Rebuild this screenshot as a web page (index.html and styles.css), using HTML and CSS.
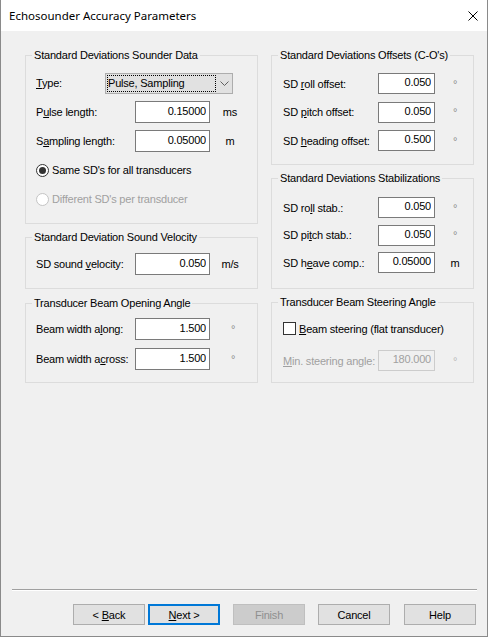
FILE: index.html
```html
<!DOCTYPE html>
<html lang="en">
<head>
  <meta charset="UTF-8" />
  <title>Echosounder Accuracy Parameters</title>
  <link rel="stylesheet" href="styles.css">
</head>
<body>
  <div class="window">
    <div class="titlebar">
      <span class="title">Echosounder Accuracy Parameters</span>
      <svg class="close" width="10" height="10" viewBox="0 0 10 10">
        <path d="M0.5 0.5 L9.5 9.5 M9.5 0.5 L0.5 9.5" stroke="#000" stroke-width="1" fill="none" />
      </svg>
    </div>

    <div class="client">
      <div class="columns">

        <div class="column col-left">
          <div class="group g-sounder">
            <div class="group-title">Standard Deviations Sounder Data</div>
            <div class="rows">
              <div class="row">
                <span class="label label-type"><u>T</u>ype:</span>
                <div class="combo">
                  <span class="combo-text">Pulse, Sampling</span>
                  <svg class="chevron" width="9" height="5" viewBox="0 0 9 5">
                    <path d="M0.5 0.5 L4.5 4.5 L8.5 0.5" stroke="#606060" stroke-width="1" fill="none" />
                  </svg>
                </div>
              </div>
              <div class="row">
                <span class="label">P<u>u</u>lse length:</span>
                <input class="field" type="text" value="0.15000" readonly>
                <span class="unit">ms</span>
              </div>
              <div class="row">
                <span class="label">S<u>a</u>mpling length:</span>
                <input class="field" type="text" value="0.05000" readonly>
                <span class="unit">m</span>
              </div>
              <div class="row">
                <span class="radio checked"></span>
                <span class="option">Same SD's for all transducers</span>
              </div>
              <div class="row disabled">
                <span class="radio"></span>
                <span class="option">Different SD's per transducer</span>
              </div>
            </div>
          </div>

          <div class="group g-velocity">
            <div class="group-title">Standard Deviation Sound Velocity</div>
            <div class="rows">
              <div class="row">
                <span class="label">SD sound <u>v</u>elocity:</span>
                <input class="field" type="text" value="0.050" readonly>
                <span class="unit">m/s</span>
              </div>
            </div>
          </div>

          <div class="group g-opening">
            <div class="group-title">Transducer Beam Opening Angle</div>
            <div class="rows">
              <div class="row">
                <span class="label">Beam width a<u>l</u>ong:</span>
                <input class="field" type="text" value="1.500" readonly>
                <span class="unit deg">°</span>
              </div>
              <div class="row">
                <span class="label">Beam width a<u>c</u>ross:</span>
                <input class="field" type="text" value="1.500" readonly>
                <span class="unit deg">°</span>
              </div>
            </div>
          </div>
        </div>

        <div class="column col-right">
          <div class="group g-offsets">
            <div class="group-title">Standard Deviations Offsets (C-O's)</div>
            <div class="rows">
              <div class="row">
                <span class="label">SD <u>r</u>oll offset:</span>
                <input class="field" type="text" value="0.050" readonly>
                <span class="unit deg">°</span>
              </div>
              <div class="row">
                <span class="label">SD <u>p</u>itch offset:</span>
                <input class="field" type="text" value="0.050" readonly>
                <span class="unit deg">°</span>
              </div>
              <div class="row">
                <span class="label">SD <u>h</u>eading offset:</span>
                <input class="field" type="text" value="0.500" readonly>
                <span class="unit deg">°</span>
              </div>
            </div>
          </div>

          <div class="group g-stab">
            <div class="group-title">Standard Deviations Stabilizations</div>
            <div class="rows">
              <div class="row">
                <span class="label">SD ro<u>l</u>l stab.:</span>
                <input class="field" type="text" value="0.050" readonly>
                <span class="unit deg">°</span>
              </div>
              <div class="row">
                <span class="label">SD pi<u>t</u>ch stab.:</span>
                <input class="field" type="text" value="0.050" readonly>
                <span class="unit deg">°</span>
              </div>
              <div class="row">
                <span class="label">SD h<u>e</u>ave comp.:</span>
                <input class="field" type="text" value="0.05000" readonly>
                <span class="unit">m</span>
              </div>
            </div>
          </div>

          <div class="group g-steer">
            <div class="group-title">Transducer Beam Steering Angle</div>
            <div class="rows">
              <div class="row">
                <span class="checkbox"></span>
                <span class="option"><u>B</u>eam steering (flat transducer)</span>
              </div>
              <div class="row disabled">
                <span class="label"><u>M</u>in. steering angle:</span>
                <input class="field" type="text" value="180.000" readonly disabled>
                <span class="unit deg">°</span>
              </div>
            </div>
          </div>
        </div>

      </div>

      <div class="footer">
        <div class="separator"></div>
        <div class="buttons">
          <button class="btn">&lt; <u>B</u>ack</button>
          <button class="btn btn-default"><u>N</u>ext &gt;</button>
          <button class="btn" disabled>Finish</button>
          <button class="btn">Cancel</button>
          <button class="btn">Help</button>
        </div>
      </div>
    </div>
  </div>
</body>
</html>
```

FILE: styles.css
```css
body {
  margin: 0;
  background: #f0f0f0;
}

.window {
  width: 488px;
  height: 637px;
  box-sizing: border-box;
  border: 1px solid #8a8a8a;
  border-top: none;
  display: flex;
  flex-direction: column;
  font-family: "Liberation Sans", Arial, sans-serif;
  font-size: 11px;
  letter-spacing: -0.2px;
  color: #000;
}

/* title bar */
.titlebar {
  height: 31px;
  flex-shrink: 0;
  background: #fff;
  display: flex;
  align-items: center;
  justify-content: space-between;
  padding: 0 9px 0 8px;
}
.title {
  font-family: "Noto Sans", "Open Sans", sans-serif;
  font-size: 11.5px;
  letter-spacing: 0;
}
.close {
  display: block;
}

/* dialog body */
.client {
  flex: 1;
  background: #f0f0f0;
  display: flex;
  flex-direction: column;
}
.columns {
  display: flex;
  padding: 24px 0 0 24px;
}
.column {
  display: flex;
  flex-direction: column;
}
.col-left {
  width: 233px;
}
.col-right {
  width: 203px;
  margin-left: 13px;
}

.group {
  border: 1px solid #dcdcdc;
  box-sizing: border-box;
}
.group-title {
  margin: -7px 0 0 6px;
  padding: 0 2px;
  height: 13px;
  line-height: 13px;
  width: max-content;
  background: #f0f0f0;
}
.rows {
  display: flex;
  flex-direction: column;
}
.row {
  display: flex;
  align-items: center;
  height: 22px;
  padding-left: 10px;
}

.g-sounder { height: 169px; }
.g-sounder .rows { padding-top: 10px; gap: 7px; }
.g-velocity { height: 52px; margin-top: 13px; }
.g-velocity .rows { padding-top: 9px; }
.g-opening { height: 80px; margin-top: 14px; }
.g-opening .rows { padding-top: 8px; gap: 8px; }

.g-offsets { height: 110px; }
.g-offsets .rows { padding-top: 11px; gap: 7.5px; }
.g-stab { height: 111px; margin-top: 13px; }
.g-stab .rows { padding-top: 12px; gap: 6.5px; }
.g-steer { height: 81px; margin-top: 13px; }
.g-steer .rows { padding-top: 9px; gap: 11px; }

.col-right .row {
  height: 21px;
  padding-left: 11px;
}

.label {
  width: 99px;
  flex-shrink: 0;
  white-space: nowrap;
}
.label-type {
  width: 69px;
}
.col-right .label {
  width: 95px;
}

.field {
  width: 75px;
  height: 22px;
  box-sizing: border-box;
  margin: 0;
  border: 1px solid #7a7a7a;
  background: #fff;
  padding: 0 3px 3px 0;
  text-align: right;
  font: inherit;
  letter-spacing: inherit;
  color: #000;
  outline: none;
}
.col-right .field {
  width: 57px;
  height: 21px;
}

.unit {
  width: 20px;
  margin-left: 10px;
  text-align: center;
}
.unit.deg {
  color: #8a8a8a;
  padding-left: 6px;
  box-sizing: border-box;
}
.col-right .unit.deg {
  padding-left: 0;
}

/* combo box */
.combo {
  width: 128px;
  height: 21px;
  box-sizing: border-box;
  border: 1px solid #adadad;
  background: #e1e1e1;
  display: flex;
  align-items: center;
}
.combo-text {
  flex: 1;
  height: 15px;
  line-height: 15px;
  margin: 0 15px 0 1px;
  border: 1px dotted #000;
  padding-left: 0;
}
.chevron {
  display: block;
  margin-right: 3px;
  margin-left: -11px;
}

/* radio and check boxes */
.radio {
  width: 13px;
  height: 13px;
  box-sizing: border-box;
  border: 1px solid #333;
  border-radius: 50%;
  background: #fff;
  display: flex;
  align-items: center;
  justify-content: center;
}
.radio.checked::after {
  content: "";
  width: 7px;
  height: 7px;
  border-radius: 50%;
  background: #333;
}
.checkbox {
  width: 13px;
  height: 13px;
  box-sizing: border-box;
  border: 1px solid #333;
  background: #fff;
}
.option {
  margin-left: 3px;
}

.disabled {
  color: #a0a0a0;
}
.disabled .radio {
  border-color: #c4c4c4;
}
.disabled .field {
  background: #f0f0f0;
  border-color: #cccccc;
  color: #a0a0a0;
}
.disabled .unit.deg {
  color: #b8b8b8;
}

/* wizard buttons */
.footer {
  margin-top: auto;
  padding: 0 10px 11px 11px;
}
.separator {
  border-top: 1px solid #a0a0a0;
  border-bottom: 1px solid #fff;
}
.buttons {
  display: flex;
  justify-content: flex-end;
  margin-top: 13px;
  padding-right: 1px;
}
.btn {
  width: 72px;
  height: 21px;
  box-sizing: border-box;
  margin: 0 0 0 13px;
  padding: 0;
  border: 1px solid #adadad;
  background: #e1e1e1;
  font: inherit;
  letter-spacing: inherit;
  color: #000;
}
.btn-default {
  margin-left: 3px;
  border-color: #0078d7;
  box-shadow: inset 0 0 0 1px #0078d7;
}
.btn:disabled {
  background: #cccccc;
  border-color: #bfbfbf;
  color: #8f8f8f;
}
.btn:last-child {
  margin-left: 14px;
}
```
